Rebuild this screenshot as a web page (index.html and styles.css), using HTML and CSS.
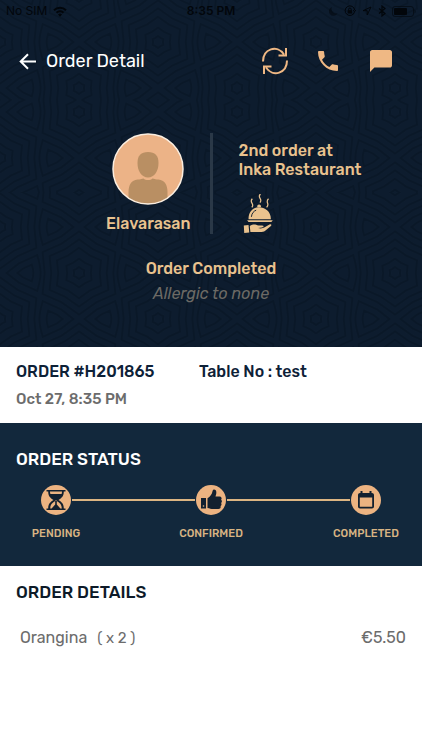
FILE: index.html
```
<!DOCTYPE html>
<html lang="en">
<head>
<meta charset="utf-8">
<meta name="viewport" content="width=device-width, initial-scale=1">
<title>Order Detail</title>
<link rel="stylesheet" href="styles.css">
</head>
<body>
<section class="hero">
  <svg class="hero-pattern" aria-hidden="true">
    <defs>
      <polygon id="star" vector-effect="non-scaling-stroke" points="0,-40 17,-28 35,-20 33,0 35,20 17,28 0,40 -17,28 -35,20 -33,0 -35,-20 -17,-28"/>
      <path id="drop" vector-effect="non-scaling-stroke" d="M-24 0 L-10 -11 L12 -21 Q16 -8 16 0 Q16 8 12 21 L-10 11Z"/>
      <g id="rosette">
        <use href="#star" transform="scale(1.04)"/>
        <use href="#star" transform="scale(.84)"/>
        <use href="#star" transform="scale(.63)"/>
        <use href="#star" transform="scale(.36)"/>
        <use href="#star" transform="scale(.15)"/>
      </g>
      <g id="leaf">
        <use href="#drop" transform="scale(.85)"/>
        <use href="#drop" transform="scale(.4)"/>
      </g>
      <g id="tile">
        <use href="#rosette" x="79" y="46"/>
        <use href="#rosette"/>
        <use href="#rosette" x="158"/>
        <use href="#rosette" y="92"/>
        <use href="#rosette" x="158" y="92"/>
        <use href="#leaf" x="27" y="46"/>
        <use href="#leaf" x="105"/>
        <use href="#leaf" x="105" y="92"/>
        <use href="#leaf" transform="translate(131 46) scale(-1 1)"/>
        <use href="#leaf" transform="translate(53 0) scale(-1 1)"/>
        <use href="#leaf" transform="translate(53 92) scale(-1 1)"/>
      </g>
      <pattern id="weave-top" width="158" height="92" patternUnits="userSpaceOnUse" patternTransform="translate(0 42)"><use class="weave" href="#tile"/></pattern>
      <pattern id="weave-mid" width="158" height="92" patternUnits="userSpaceOnUse" patternTransform="translate(0 66)"><use class="weave" href="#tile"/></pattern>
      <pattern id="weave-low" width="158" height="92" patternUnits="userSpaceOnUse" patternTransform="translate(0 227)"><use class="weave" href="#tile"/></pattern>
    </defs>
    <rect width="100%" height="100" fill="url(#weave-top)"/>
    <rect y="100" width="100%" height="92" fill="url(#weave-mid)"/>
    <rect y="192" width="100%" height="100%" fill="url(#weave-low)"/>
  </svg>

  <div class="statusbar">
    <div class="carrier">
      <span>No SIM</span>
      <svg width="14" height="11" viewBox="0 0 14 11" aria-hidden="true"><g fill="none" stroke="currentColor" stroke-width="2"><path d="M1 4.2a8.6 8.6 0 0 1 12 0"/><path d="M3.500 6.800a5 5 0 0 1 7 0"/></g><path fill="currentColor" d="M5 8.600a2.800 2.800 0 0 1 4 0L7 10.700z"/></svg>
    </div>
    <span class="clock">8:35 PM</span>
    <div class="indicators">
      <svg width="9" height="10" viewBox="0 0 9 10" opacity=".5" aria-hidden="true"><path fill="currentColor" d="M3 1a4.500 4.500 0 0 0 5.500 6.200A4.500 4.500 0 1 1 3 1z"/></svg>
      <svg width="12" height="12" viewBox="0 0 12 12" fill="none" stroke="currentColor" aria-hidden="true"><path d="M10.500 7.200A4.800 4.800 0 1 1 10.700 5M9 5.200l1.700 1.400L12 5"/><path d="M4.600 5.500V4.300a1.300 1.300 0 0 1 2.600 0v1.200"/><path fill="currentColor" stroke="none" d="M3.700 5.200h4.400v3.300H3.700z"/></svg>
      <svg width="10" height="10" viewBox="0 0 10 10" fill="none" stroke="currentColor" aria-hidden="true"><path d="M9 1 1 4.700h4.200V9z"/></svg>
      <svg width="8" height="12" viewBox="0 0 8 12" fill="none" stroke="currentColor" stroke-width="1.200" aria-hidden="true"><path d="m1 3.500 6 5L4 11V1l3 2.500-6 5"/></svg>
      <svg width="24" height="11" viewBox="0 0 24 11" aria-hidden="true"><rect x=".5" y=".5" width="21" height="10" rx="2.500" fill="none" stroke="currentColor" opacity=".6"/><rect x="2" y="2" width="13" height="7" rx="1" fill="currentColor"/><path fill="currentColor" opacity=".6" d="M22.500 3.500c1.500.6 1.500 3.400 0 4z"/></svg>
    </div>
  </div>

  <header class="navbar">
    <a class="back" href="#" aria-label="Back">
      <svg width="17" height="17" viewBox="0 0 17 17" fill="none" stroke="currentColor" stroke-width="2" aria-hidden="true"><path d="M17 8.500H2M9 1.200L1.700 8.500 9 15.800"/></svg>
    </a>
    <h1>Order Detail</h1>
    <div class="actions">
      <button type="button" aria-label="Refresh">
        <svg width="28" height="28" viewBox="0 0 28 28" fill="none" stroke="currentColor" stroke-width="2" aria-hidden="true"><path d="M2 14.500C2 2 16-3 23 7.500M25 1v7.500h-7.500"/><path d="M26 13.500C26 26 12 31 5 20.500M3 27v-7.500h7.500"/></svg>
      </button>
      <button type="button" aria-label="Call">
        <svg width="20" height="20" viewBox="3 3 18 18" fill="currentColor" aria-hidden="true"><path d="M6.620 10.790c1.440 2.830 3.760 5.140 6.590 6.590l2.200-2.200c.27-.27.67-.36 1.020-.24 1.120.37 2.330.57 3.570.57.550 0 1 .45 1 1V20c0 .55-.45 1-1 1-9.390 0-17-7.610-17-17 0-.55.45-1 1-1h3.500c.55 0 1 .45 1 1 0 1.250.2 2.450.57 3.570.11.350.03.740-.25 1.020z"/></svg>
      </button>
      <button type="button" aria-label="Message">
        <svg width="22" height="22" viewBox="2 2 20 20" fill="currentColor" aria-hidden="true"><path d="M20 2H4c-1.100 0-2 .9-2 2v18l4-4h14c1.100 0 2-.9 2-2V4c0-1.100-.9-2-2-2z"/></svg>
      </button>
    </div>
  </header>

  <div class="profile">
    <figure class="guest">
      <svg class="avatar" width="72" height="72" viewBox="0 0 72 72" aria-hidden="true">
        <defs><clipPath id="round"><circle cx="36" cy="36" r="35"/></clipPath></defs>
        <circle cx="36" cy="36" r="35" fill="#ecb387"/>
        <g fill="#b98f63" clip-path="url(#round)"><path d="M36 19c7 0 10.500 3.500 10.500 11 0 8-4 14.500-10.500 14.500S25.500 38 25.500 30c0-7.500 3.500-11 10.500-11z"/><path d="M16.500 72V59c0-7 3-12 9-12.500 2 0 4.500-.5 6-1 2 2 7 2 9 0 1.500.5 4 1 6 1 6 .5 9 5.500 9 12.500v13z"/></g>
        <circle cx="36" cy="36" r="35" fill="none" stroke="#fbeee0" stroke-width="1.500"/>
      </svg>
      <figcaption>Elavarasan</figcaption>
    </figure>
    <div class="divider"></div>
    <div class="visit">
      <p>2nd order at<br>Inka Restaurant</p>
      <svg width="32" height="40" viewBox="0 0 32 42" fill="currentColor" aria-hidden="true">
        <path d="M5 26.500C5 18 10 14 16 14s12.500 4 12.500 12.500zM3.500 27.500h27L29 29.500H5z"/>
        <path d="M14.300 14a2 2 0 1 1 3.600 0z"/>
        <path fill="none" stroke="#0d1c2e" d="M8 24c.5-4 2.500-6 5-7"/>
        <path fill="none" stroke="currentColor" stroke-width="1.300" d="M9 5c-4 4 3 5-.5 9M17.500 0c-4 4 3 5-.5 9M26 5c-4 4 2 5-2 9"/>
        <path d="m0 33 5-.5.8 8L.5 41zM6.300 33.500c4-2.500 6-1.500 9.200-.5h4c2 .3 1.500 2-.5 2.200l-4 .5c3 .8 5 .3 7-.7l5-3c2-.5 2.500.5 1.500 1.500l-6 5.200c-2 1.500-4 1.300-7 1.300H7z"/>
      </svg>
    </div>
  </div>

  <p class="state">Order Completed</p>
  <p class="allergy">Allergic to none</p>
</section>

<main>
  <section class="summary">
    <h2>ORDER #H201865</h2>
    <p class="table-no">Table No : test</p>
    <p class="date">Oct 27, 8:35 PM</p>
  </section>

  <section class="progress">
    <h2>ORDER STATUS</h2>
    <div class="track">
      <div class="step">
        <svg width="32" height="32" viewBox="0 0 32 32" aria-hidden="true"><circle cx="16" cy="16" r="15" fill="#ecb381"/><path fill="#13202f" d="M6.500 6h19v1.600h-1.700c0 4.500-2 6.500-5.300 8.400 3.300 2 5.300 4 5.300 8.400h1.700V26h-19v-1.600h1.700c0-4.400 2-6.400 5.300-8.400-3.300-1.900-5.300-3.900-5.300-8.400H6.500z"/><path fill="#ecb381" d="M10 7.600h12c0 1-.1 1.700-.4 2.400H10.400C10.100 9.300 10 8.600 10 7.600zM15.200 16.500h1.600v4l3.600 3.900h1.400c0-3.500-1.800-5.700-5-7.400h-1.600c-3.200 1.700-5 3.900-5 7.400h1.400l3.600-3.900z"/></svg>
        <span>PENDING</span>
      </div>
      <div class="line"></div>
      <div class="step">
        <svg width="32" height="32" viewBox="0 0 32 32" aria-hidden="true"><circle cx="16" cy="16" r="15" fill="#ecb381"/><path fill="#13202f" d="M6 14h5v10.500H6zM12.500 14.200c2.500-1.500 4.500-4 5-7 .3-2.500 3.500-2.200 3.800.5.2 2-.5 3.500-.8 4.800h4c2 0 2.800 2 1.600 3.200 1.200 1 1 2.600 0 3.200.8 1.200.5 2.500-.5 3 .5 1.800-.5 3.100-2.300 3.100h-5c-2.500 0-3.500-.5-5.800-1z"/><circle cx="8.500" cy="22" r=".8" fill="#ecb381"/></svg>
        <span>CONFIRMED</span>
      </div>
      <div class="line"></div>
      <div class="step">
        <svg width="32" height="32" viewBox="0 0 32 32" aria-hidden="true"><circle cx="16" cy="16" r="15" fill="#ecb381"/><path fill="#13202f" fill-rule="evenodd" d="M10.500 7h2v2h7V7h2v2h.5c1.100 0 2 .8 2 2v11.500c0 1.100-.9 2-2 2H10c-1.100 0-2-.9-2-2V11c0-1.200.9-2 2-2h.5zM9.800 13.500v9.200h12.400v-9.200z"/></svg>
        <span>COMPLETED</span>
      </div>
    </div>
  </section>

  <section class="details">
    <h2>ORDER DETAILS</h2>
    <table>
      <tbody>
        <tr><th scope="row">Orangina<span class="qty">( x 2 )</span></th><td>€5.50</td></tr>
      </tbody>
    </table>
  </section>
</main>
</body>
</html>
```
FILE: styles.css
```
* { box-sizing: border-box; }

body {
  margin: 0;
  background: #fff;
  color: #0d2137;
  font-family: Rubik, Roboto, "Liberation Sans", sans-serif;
  font-size: 16px;
  line-height: 20px;
}

h1, h2, p, figure { margin: 0; }
h2 { font-size: 17px; font-weight: 500; line-height: 20px; }

.hero {
  position: relative;
  background: #0d1c2e;
  padding-bottom: 43px;
  overflow: hidden;
}

.hero-pattern {
  position: absolute;
  inset: 0;
  width: 100%;
  height: 100%;
}

.weave { fill: none; stroke: #0a1828; stroke-width: 2px; }

.statusbar, .navbar, .profile, .state, .allergy { position: relative; }

.statusbar {
  display: grid;
  grid-template-columns: 1fr auto 1fr;
  align-items: center;
  height: 22px;
  padding: 0 6px;
  color: #02060b;
  font: 12px/14px Inter, sans-serif;
}

.carrier, .indicators { display: flex; align-items: center; gap: 6px; }
.indicators { justify-content: flex-end; }
.clock { font-weight: 600; }

.navbar {
  display: flex;
  align-items: center;
  height: 78px;
  padding: 0 27px 0 19px;
}

.back { display: flex; color: #fff; }

.navbar h1 {
  flex: 1;
  margin-left: 10px;
  color: #fff;
  font-size: 18px;
  font-weight: 400;
  line-height: 24px;
}

.actions { display: flex; align-items: center; gap: 25px; color: #efb884; }

.actions button {
  display: flex;
  justify-content: center;
  width: 28px;
  padding: 0;
  border: 0;
  background: none;
  color: inherit;
}

.profile {
  display: grid;
  grid-template-columns: 1fr 3px 1fr;
  padding-top: 33px;
  color: #e9c28e;
  font-weight: 500;
}

.guest {
  display: flex;
  flex-direction: column;
  align-items: center;
  justify-self: end;
  gap: 9px;
  margin-right: 19px;
}

.divider { background: #2a3847; }
.visit { padding: 8px 0 0 26px; line-height: 19px; }
.visit svg { display: block; margin: 15px 0 0 4px; }

.state {
  margin-top: 25px;
  color: #e9c28e;
  font-weight: 500;
  text-align: center;
}

.allergy {
  margin-top: 5px;
  color: #6c6a65;
  font-style: italic;
  text-align: center;
}

.summary {
  display: grid;
  grid-template-columns: 1fr 1fr;
  row-gap: 7px;
  padding: 15px 16px 14px;
}

.summary h2, .table-no { font-size: 16px; font-weight: 500; }
.table-no { margin-left: -12px; }
.date { color: #6c6c6c; font-size: 15px; font-weight: 500; }

.progress {
  padding: 26px 16px 22px;
  background: #12283c;
}

.progress h2 { color: #fff; }

.track {
  display: grid;
  grid-template-columns: 80px 1fr 80px 1fr 80px;
  margin-top: 15px;
}

.step {
  display: flex;
  flex-direction: column;
  align-items: center;
  gap: 8px;
  color: #d8b483;
  font-size: 11px;
  font-weight: 500;
}

.line { height: 2px; margin: 15px -24px 0; background: #dcb582; }

.details { padding: 16px; color: #0d1a28; }

.details table {
  width: 100%;
  margin-top: 26px;
  border-collapse: collapse;
  color: #6c6c6c;
}

.details th, .details td { padding: 0; font-weight: 400; }
.details th { padding-left: 4px; text-align: left; }
.details td { text-align: right; }
.qty { margin-left: 10px; font-size: 15px; }
```
